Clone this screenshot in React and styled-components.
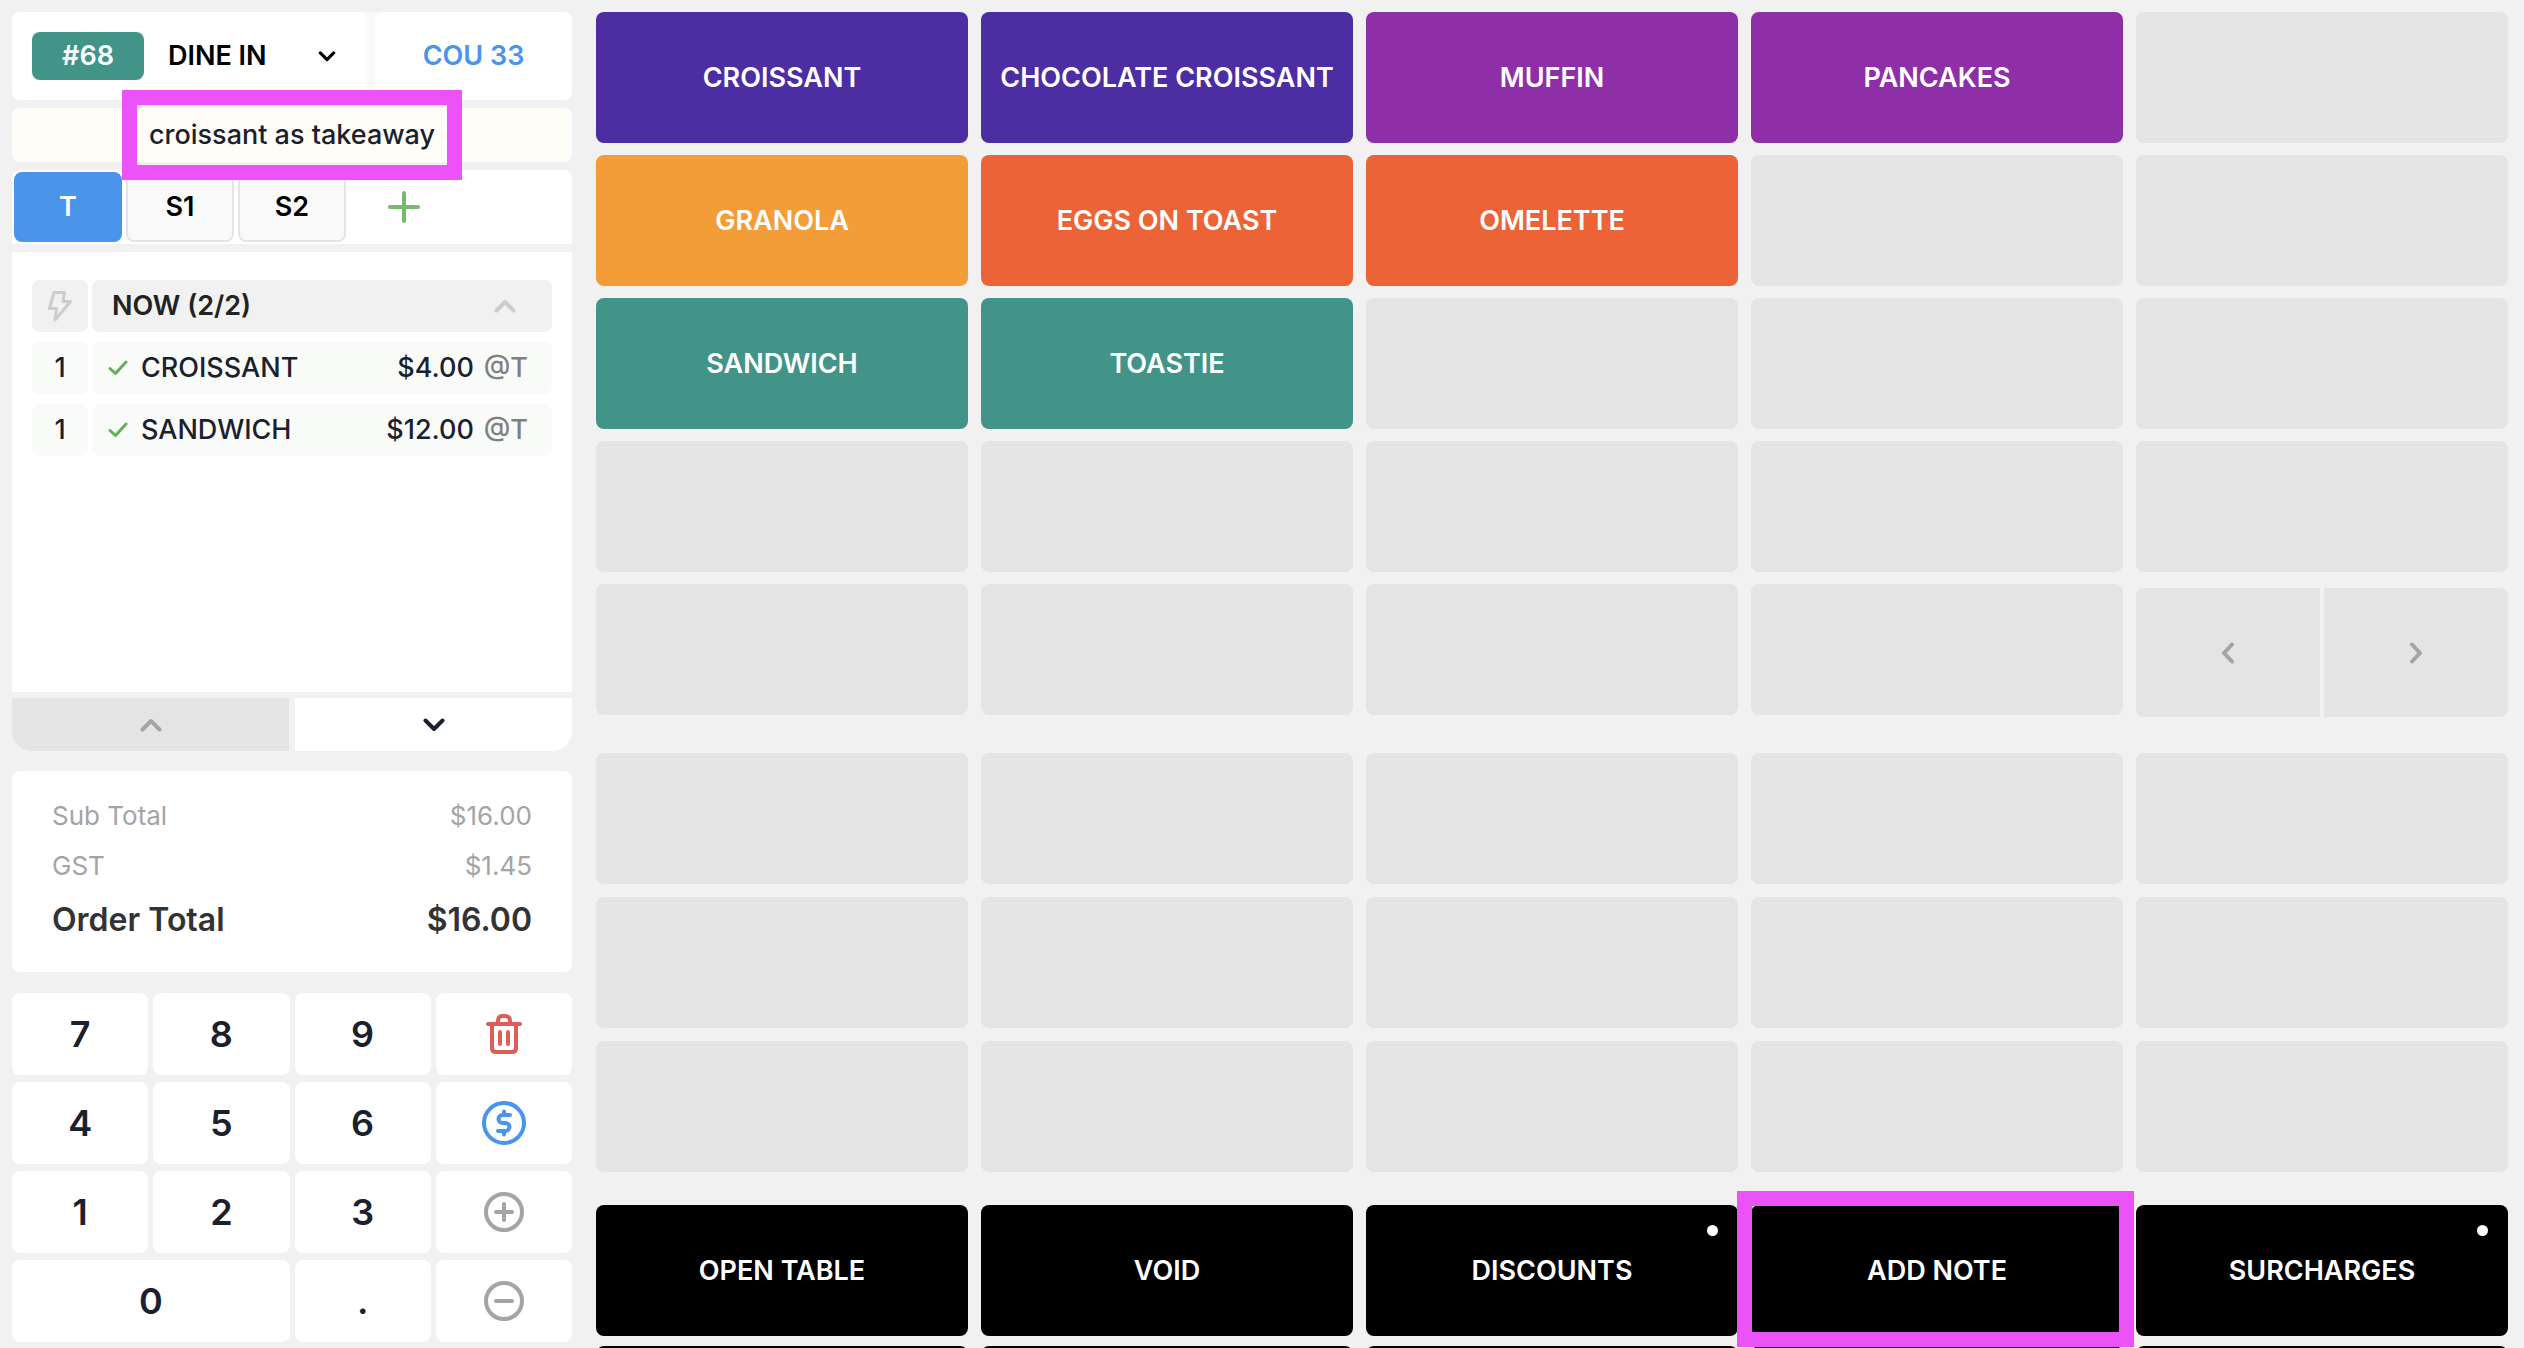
import React from "react";
import styled, { createGlobalStyle, css } from "styled-components";

const GlobalStyle = createGlobalStyle`
  *, *::before, *::after { box-sizing: border-box; }
  body { margin: 0; background: #f1f1f1; }
  button { font: inherit; color: inherit; }
  button { margin: 0; padding: 0; border: 0; cursor: pointer; }
  svg { display: block; flex: none; }
`;

const Screen = styled.div`
  display: grid;
  grid-template-columns: 560px minmax(0, 1fr);
  column-gap: 24px;
  align-items: start;
  height: 100vh;
  overflow: hidden;
  padding: 12px 16px 0 12px;
  background: #f1f1f1;
  color: #1b202e;
  font-family: Inter, "Liberation Sans", sans-serif;
  font-size: 27px;
  font-weight: 500;
  line-height: 34px;
`;

const OrderPanel = styled.aside`
  display: flex;
  flex-direction: column;
  gap: 8px;
`;

const OrderHeader = styled.header`
  display: grid;
  grid-template-columns: minmax(0, 1fr) 197px;
  gap: 8px;
  height: 88px;
  border-radius: 8px;
  background: #fafafa;
  overflow: hidden;
  font-weight: 600;
`;

const OrderType = styled.button`
  display: flex;
  align-items: center;
  gap: 24px;
  padding: 0 31px 0 20px;
  border-radius: 8px;
  background: #fff;
  color: #000;
  font-weight: 600;
  text-align: left;
`;

const OrderNumber = styled.span`
  display: grid;
  place-items: center;
  width: 112px;
  height: 48px;
  border-radius: 8px;
  background: #439488;
  color: #fff;
`;

const TypeName = styled.span`
  flex: 1;
`;

const TableButton = styled.button`
  border-radius: 8px;
  background: #fff;
  color: #4a94ec;
  font-weight: 600;
`;

const highlight = css`
  &::after {
    content: "";
    position: absolute;
    border: 15px solid #eb52f7;
    pointer-events: none;
    z-index: 2;
  }
`;

const OrderNote = styled.div`
  display: flex;
  align-items: center;
  justify-content: center;
  height: 54px;
  border-radius: 8px;
  background: #fffdf8;
`;

const NoteText = styled.span`
  position: relative;
  ${highlight}
  &::after { inset: -28px -27px; }
`;

const SeatTabs = styled.nav`
  display: flex;
  gap: 4px;
  height: 74px;
  padding: 2px;
  border-radius: 8px 8px 0 0;
  background: #fff;
`;

const SeatTab = styled.button`
  width: 108px;
  border: 2px solid ${(p) => (p.$active ? "#4a94ec" : "#e4e4e4")};
  border-radius: 8px;
  background: ${(p) => (p.$active ? "#4a94ec" : "#fafafa")};
  color: ${(p) => (p.$active ? "#fff" : "#000")};
  font-weight: 600;
`;

const AddSeat = styled.button`
  display: grid;
  place-items: center;
  width: 108px;
  background: none;
  color: #7ab770;
`;

const OrderLines = styled.section`
  display: flex;
  flex-direction: column;
  gap: 10px;
  height: 440px;
  padding: 28px 20px;
  background: #fff;
`;

const Line = styled.div`
  display: grid;
  grid-template-columns: 56px minmax(0, 1fr);
  gap: 4px;
  height: 52px;
`;

const Cell = styled.button`
  display: flex;
  align-items: center;
  justify-content: ${(p) => (p.$center ? "center" : "flex-start")};
  padding: ${(p) => (p.$center ? "0" : p.$course ? "0 36px 0 20px" : "0 24px 0 16px")};
  border-radius: 8px;
  background: ${(p) => (p.$course ? "#f1f1f1" : "#f9fbf9")};
  color: ${(p) => (p.$course ? "#222" : "#1b202e")};
  font-weight: ${(p) => (p.$course ? 600 : 500)};
`;

const CourseName = styled.span`
  flex: 1;
  text-align: left;
`;

const ItemName = styled(CourseName)`
  padding-left: 13px;
`;

const Seat = styled.span`
  padding-left: 10px;
  color: #808080;
`;

const ScrollBar = styled.div`
  display: grid;
  grid-template-columns: 1fr 1fr;
  gap: 6px;
  height: 53px;
  margin: -2px 0 12px;
  border-radius: 0 0 20px 20px;
  overflow: hidden;
`;

const ScrollButton = styled.button`
  display: grid;
  place-items: center;
  background: ${(p) => (p.disabled ? "#e4e4e4" : "#fff")};
  color: ${(p) => (p.disabled ? "#a4a4a4" : "#1b202e")};
`;

const Totals = styled.dl`
  display: flex;
  flex-direction: column;
  gap: 16px;
  margin: 0 0 13px;
  height: 201px;
  padding: 28px 40px 0;
  border-radius: 8px;
  background: #fff;
`;

const TotalRow = styled.div`
  display: flex;
  justify-content: space-between;
  line-height: ${(p) => (p.$grand ? 42 : 34)}px;
  color: ${(p) => (p.$grand ? "#333" : "#a4a4a4")};
  font-size: ${(p) => (p.$grand ? 32 : 26)}px;
  font-weight: ${(p) => (p.$grand ? 600 : 400)};
  dd { margin: 0; }
`;

const Keypad = styled.div`
  display: grid;
  grid-template-columns: repeat(4, minmax(0, 1fr));
  grid-auto-rows: 82px;
  gap: 7px 5px;
`;

const Key = styled.button`
  display: grid;
  place-items: center;
  grid-column: span ${(p) => p.$span || 1};
  border-radius: 8px;
  background: #fff;
  color: ${(p) => p.$color || "#1b202e"};
  font-size: 36px;
  font-weight: 600;
`;

const Menu = styled.main`
  display: flex;
  flex-direction: column;
`;

const TileGrid = styled.div`
  display: grid;
  grid-template-columns: repeat(5, minmax(0, 1fr));
  grid-auto-rows: 131px;
  gap: ${(p) => p.$gap}px 13px;
  margin-bottom: ${(p) => p.$after || 0}px;
`;

const Tile = styled.button`
  position: relative;
  border-radius: 8px;
  background: ${(p) => p.$color || "#e4e4e4"};
  color: #fff;
  font-weight: 600;
  ${(p) =>
    p.$marked &&
    css`
      ${highlight}
      &::after { inset: -14px -11px -11px -14px; }
    `}
`;

const SubmenuDot = styled.span`
  position: absolute;
  top: 20px;
  right: 20px;
  width: 11px;
  height: 11px;
  border-radius: 50%;
  background: #fff;
`;

const Pager = styled.div`
  display: grid;
  grid-template-columns: 1fr 1fr;
  gap: 4px;
  height: 129px;
  margin-top: 4px;
  border-radius: 8px;
  overflow: hidden;
`;

const PagerButton = styled.button`
  display: grid;
  place-items: center;
  background: #e4e4e4;
  color: #a4a4a4;
`;

const chevrons = {
  up: "M2.500 11.500 L11 3 L19.500 11.500",
  down: "M2.500 2.500 L11 11 L19.500 2.500",
};

function Chevron({ dir, size = 22, color = "currentColor" }) {
  return (
    <svg width={size} height={Math.round((size * 14) / 22)} viewBox="0 0 22 14" fill="none" stroke={color} strokeWidth="4" strokeLinecap="round" strokeLinejoin="round" aria-hidden="true">
      <path d={chevrons[dir]} />
    </svg>
  );
}

function SideChevron({ dir }) {
  return (
    <svg width="14" height="22" viewBox="0 0 14 22" fill="none" stroke="currentColor" strokeWidth="4" strokeLinecap="round" strokeLinejoin="round" aria-hidden="true">
      <path d={dir === "left" ? "M11 2.500 L3 11 L11 19.500" : "M3 2.500 L11 11 L3 19.500"} />
    </svg>
  );
}

const Plus = () => (
  <svg width="32" height="32" viewBox="0 0 32 32" stroke="currentColor" strokeWidth="4" strokeLinecap="round" aria-hidden="true">
    <path d="M16 2 V30 M2 16 H30" />
  </svg>
);

const Bolt = () => (
  <svg width="26" height="32" viewBox="0 0 26 32" fill="none" stroke="#ccc" strokeWidth="3" strokeLinejoin="round" aria-hidden="true">
    <path d="M7 2.500 H17.500 L16 11.500 H23.500 L8 30 L9.500 18.500 H2.500 Z" />
  </svg>
);

const Tick = () => (
  <svg width="20" height="16" viewBox="0 0 20 16" fill="none" stroke="#63ae58" strokeWidth="3" strokeLinecap="round" strokeLinejoin="round" aria-hidden="true">
    <path d="M2 8.500 L7.500 13.500 L18 2" />
  </svg>
);

const Trash = () => (
  <svg width="36" height="40" viewBox="0 0 36 40" fill="none" stroke="currentColor" strokeWidth="4" strokeLinecap="round" strokeLinejoin="round" aria-hidden="true">
    <path d="M2 10 H34 M6 10 V34 Q6 38 10 38 H26 Q30 38 30 34 V10 M12 10 V7 Q12 2 17 2 H19 Q24 2 24 7 V10 M14 18 V30 M22 18 V30" />
  </svg>
);

const Dollar = () => (
  <svg width="44" height="44" viewBox="0 0 44 44" fill="none" stroke="currentColor" strokeWidth="4" strokeLinecap="round" strokeLinejoin="round" aria-hidden="true">
    <circle cx="22" cy="22" r="20" />
    <path d="M28 14 H20.500 A4 4 0 0 0 20.500 22 H23.500 A4 4 0 0 1 23.500 30 H16 M22 10.500 V14 M22 30 V33.500" />
  </svg>
);

const Round = ({ plus }) => (
  <svg width="40" height="40" viewBox="0 0 40 40" fill="none" stroke="currentColor" strokeWidth="4" strokeLinecap="round" aria-hidden="true">
    <circle cx="20" cy="20" r="18" />
    <path d={plus ? "M12 20 H28 M20 12 V28" : "M12 20 H28"} />
  </svg>
);

const INDIGO = "#4d2da2";
const PURPLE = "#8e2fa8";
const AMBER = "#f29d38";
const ORANGE = "#eb6337";
const TEAL = "#439488";

const products = [
  ["CROISSANT", INDIGO], ["CHOCOLATE CROISSANT", INDIGO], ["MUFFIN", PURPLE], ["PANCAKES", PURPLE], [],
  ["GRANOLA", AMBER], ["EGGS ON TOAST", ORANGE], ["OMELETTE", ORANGE], [], [],
  ["SANDWICH", TEAL], ["TOASTIE", TEAL], [], [], [],
  [], [], [], [], [],
  [], [], [], [],
];

const actions = [
  { name: "OPEN TABLE" },
  { name: "VOID" },
  { name: "DISCOUNTS", submenu: true },
  { name: "ADD NOTE", marked: true },
  { name: "SURCHARGES", submenu: true },
  {}, {}, {}, {}, {},
];

const lines = [
  { qty: 1, name: "CROISSANT", price: "$4.00", seat: "@T" },
  { qty: 1, name: "SANDWICH", price: "$12.00", seat: "@T" },
];

const keys = [
  { label: "7" }, { label: "8" }, { label: "9" }, { name: "Delete", icon: <Trash />, color: "#de5e57" },
  { label: "4" }, { label: "5" }, { label: "6" }, { name: "Pay", icon: <Dollar />, color: "#4a94ec" },
  { label: "1" }, { label: "2" }, { label: "3" }, { name: "Increase", icon: <Round plus />, color: "#a4a4a4" },
  { label: "0", span: 2 }, { label: "." }, { name: "Decrease", icon: <Round />, color: "#a4a4a4" },
];

export default function App() {
  return (
    <>
      <GlobalStyle />
      <Screen>
        <OrderPanel>
          <OrderHeader>
            <OrderType type="button">
              <OrderNumber>#68</OrderNumber>
              <TypeName>DINE IN</TypeName>
              <Chevron dir="down" size={18} />
            </OrderType>
            <TableButton type="button">COU 33</TableButton>
          </OrderHeader>
          <OrderNote>
            <NoteText>croissant as takeaway</NoteText>
          </OrderNote>
          <SeatTabs>
            <SeatTab type="button" $active>T</SeatTab>
            <SeatTab type="button">S1</SeatTab>
            <SeatTab type="button">S2</SeatTab>
            <AddSeat type="button" aria-label="Add seat"><Plus /></AddSeat>
          </SeatTabs>
          <OrderLines>
            <Line>
              <Cell type="button" $center $course aria-label="Fire course"><Bolt /></Cell>
              <Cell type="button" $course>
                <CourseName>NOW (2/2)</CourseName>
                <Chevron dir="up" color="#ccc" />
              </Cell>
            </Line>
            {lines.map((l) => (
              <Line key={l.name}>
                <Cell type="button" $center>{l.qty}</Cell>
                <Cell type="button">
                  <Tick />
                  <ItemName>{l.name}</ItemName>
                  <span>{l.price}</span>
                  <Seat>{l.seat}</Seat>
                </Cell>
              </Line>
            ))}
          </OrderLines>
          <ScrollBar>
            <ScrollButton type="button" disabled aria-label="Scroll up"><Chevron dir="up" /></ScrollButton>
            <ScrollButton type="button" aria-label="Scroll down"><Chevron dir="down" /></ScrollButton>
          </ScrollBar>
          <Totals>
            <TotalRow><dt>Sub Total</dt><dd>$16.00</dd></TotalRow>
            <TotalRow><dt>GST</dt><dd>$1.45</dd></TotalRow>
            <TotalRow $grand><dt>Order Total</dt><dd>$16.00</dd></TotalRow>
          </Totals>
          <Keypad>
            {keys.map((k) => (
              <Key key={k.label || k.name} type="button" aria-label={k.name} $span={k.span} $color={k.color}>
                {k.icon || k.label}
              </Key>
            ))}
          </Keypad>
        </OrderPanel>
        <Menu>
          <TileGrid $gap={12} $after={38}>
            {products.map(([name, color], i) => (
              <Tile key={i} type="button" $color={color}>{name}</Tile>
            ))}
            <Pager>
              <PagerButton type="button" aria-label="Previous page"><SideChevron dir="left" /></PagerButton>
              <PagerButton type="button" aria-label="Next page"><SideChevron dir="right" /></PagerButton>
            </Pager>
          </TileGrid>
          <TileGrid $gap={13} $after={33}>
            {Array.from({ length: 15 }, (_, i) => <Tile key={i} type="button" />)}
          </TileGrid>
          <TileGrid $gap={10}>
            {actions.map((a, i) => (
              <Tile key={i} type="button" $color="#000" $marked={a.marked}>
                {a.name}
                {a.submenu && <SubmenuDot />}
              </Tile>
            ))}
          </TileGrid>
        </Menu>
      </Screen>
    </>
  );
}
